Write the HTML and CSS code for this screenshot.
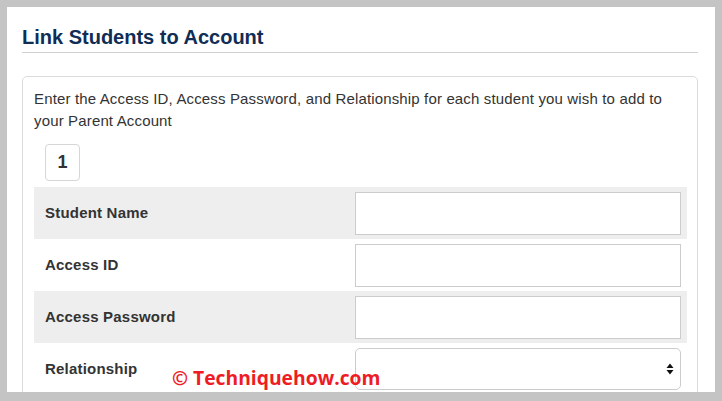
FILE: index.html
```html
<!DOCTYPE html>
<html>
<head>
<meta charset="utf-8">
<link rel="stylesheet" href="styles.css">
</head>
<body>
<div class="page">
  <h1 class="title">Link Students to Account</h1>
  <div class="panel">
    <p class="intro">Enter the Access ID, Access Password, and Relationship for each student you wish to add to your Parent Account</p>
    <div class="tab">1</div>
    <div class="rows">
      <div class="row shaded">
        <div class="label">Student Name</div>
        <div class="field"></div>
      </div>
      <div class="row">
        <div class="label">Access ID</div>
        <div class="field"></div>
      </div>
      <div class="row shaded">
        <div class="label">Access Password</div>
        <div class="field"></div>
      </div>
      <div class="row">
        <div class="label">Relationship</div>
        <div class="field select">
          <svg class="arrows" width="8" height="12" viewBox="0 0 8 12"><path d="M4 0.5 L7.5 5 H0.5 Z M4 11.5 L7.5 7 H0.5 Z" fill="#111"/></svg>
        </div>
      </div>
    </div>
  </div>
  <div class="watermark">© Techniquehow.com</div>
</div>
</body>
</html>
```
FILE: styles.css
```css
html, body {
  margin: 0;
  padding: 0;
}
body {
  background: #c4c4c4;
  width: 722px;
  height: 401px;
  overflow: hidden;
  font-family: "Liberation Sans", Arial, Helvetica, sans-serif;
}
.page {
  position: relative;
  margin: 7px 0 0 7px;
  width: 708px;
  height: 385px;
  box-sizing: border-box;
  background: #fff;
  padding: 18px 17px 0 15px;
  overflow: hidden;
}
.title {
  margin: 0;
  font-size: 20px;
  line-height: 24px;
  font-weight: bold;
  color: #0f2d55;
  padding-bottom: 3px;
  border-bottom: 1px solid #cfcfcf;
}
.panel {
  margin-top: 23px;
  border: 1px solid #dcdcdc;
  border-radius: 5px;
  padding: 11px 10px 0 11px;
  height: 400px;
}
.intro {
  margin: 0;
  font-size: 15px;
  letter-spacing: 0.15px;
  line-height: 22px;
  color: #333;
}
.tab {
  margin: 12px 0 0 11px;
  width: 35px;
  height: 37px;
  box-sizing: border-box;
  border: 1px solid #d6d6d6;
  border-radius: 4px;
  display: flex;
  align-items: center;
  justify-content: center;
  font-size: 18px;
  font-weight: bold;
  color: #333;
}
.rows {
  margin-top: 6px;
  display: flex;
  flex-direction: column;
}
.row {
  height: 52px;
  display: flex;
  align-items: center;
}
.row.shaded {
  background: #eeeeee;
}
.label {
  width: 310px;
  padding-left: 11px;
  font-size: 15px;
  letter-spacing: 0.2px;
  font-weight: bold;
  color: #333;
  margin-top: -2px;
}
.field {
  width: 326px;
  height: 43px;
  box-sizing: border-box;
  border: 1px solid #cccccc;
  background: #fff;
}
.field.select {
  height: 42px;
  border-radius: 5px;
  display: flex;
  align-items: center;
  justify-content: flex-end;
  padding-right: 6px;
}
.arrows {
  display: block;
}
.watermark {
  position: absolute;
  left: 165px;
  top: 359px;
  font-family: "Open Sans", sans-serif;
  font-weight: bold;
  font-size: 19.3px;
  line-height: 24px;
  color: #ee1c25;
}
```
